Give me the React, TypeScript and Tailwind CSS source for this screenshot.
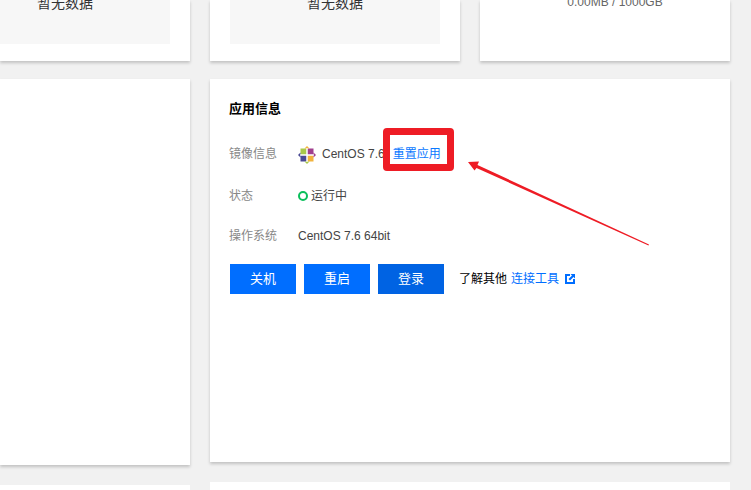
const font = { fontFamily: '"Liberation Sans", "Noto Sans CJK SC", sans-serif' };

function CentOS() {
  return (
    <svg width="18" height="18" viewBox="0 0 18 18" className="shrink-0 mt-[2px]">
      <rect x="2.500" y="2.500" width="6" height="6" fill="#a9c94a" />
      <rect x="9.500" y="2.500" width="6" height="6" fill="#a03f8e" />
      <rect x="2.500" y="9.500" width="6" height="6" fill="#4a4a94" />
      <rect x="9.500" y="9.500" width="6" height="6" fill="#f2b33d" />
      <path d="M9 0l2.500 2.500H6.500z" fill="#f2b33d" />
      <path d="M18 9l-2.500 2.500v-5z" fill="#a03f8e" />
      <path d="M9 18l-2.500-2.500h5z" fill="#a9c94a" />
      <path d="M0 9l2.500-2.500v5z" fill="#4a4a94" />
      <path d="M9 2v14M2 9h14" stroke="#fff" strokeWidth="1" />
    </svg>
  );
}

function Row({ label, children, className }: { label: string; children: React.ReactNode; className?: string }) {
  return (
    <div className={`flex items-center h-5 text-xs ${className ?? ""}`}>
      <span className="w-[69px] text-[#888]">{label}</span>
      <div className="flex items-center text-[#444]">{children}</div>
    </div>
  );
}

function Btn({ children, dark }: { children: React.ReactNode; dark?: boolean }) {
  return (
    <div className={`w-[66px] h-[30px] flex items-center justify-center text-[13px] text-white ${dark ? "bg-[#0063e3]" : "bg-[#006eff]"}`}>
      {children}
    </div>
  );
}

const shadow = "shadow-[0_2px_3px_rgba(0,0,0,0.2)]";

export default function App() {
  return (
    <div style={font} className="relative w-[751px] h-[490px] overflow-hidden bg-[#f1f1f1]">
      <div className="flex gap-5 w-[730px] h-[61px]">
        <div className={`w-[190px] h-[61px] bg-white ${shadow} pr-5`}>
          <div className="h-11 bg-[#f7f7f7] flex justify-end pr-[77px]">
            <span className="text-sm leading-4 -mt-[5px] text-[#333]">暂无数据</span>
          </div>
        </div>
        <div className={`w-[250px] h-[61px] bg-white ${shadow} px-5`}>
          <div className="h-11 bg-[#f7f7f7] flex justify-center">
            <span className="text-sm leading-4 -mt-[5px] text-[#333]">暂无数据</span>
          </div>
        </div>
        <div className={`w-[250px] h-[61px] bg-white ${shadow} flex justify-center pl-5`}>
          <span className="text-xs leading-4 -mt-[6px] text-[#666]">0.00MB / 1000GB</span>
        </div>
      </div>

      <div className="flex gap-5 w-[730px] mt-[18px]">
        <div className="w-[190px] flex flex-col gap-5">
          <div className={`h-[386px] bg-white ${shadow}`} />
          <div className="h-10 bg-white" />
        </div>
        <div className="w-[520px] flex flex-col gap-5">
          <div className={`h-[383px] bg-white ${shadow} pl-[19px] pt-[22px]`}>
            <h2 className="text-[13px] leading-4 font-bold text-black">应用信息</h2>
            <div className="mt-[27px] flex flex-col">
              <Row label="镜像信息">
                <CentOS />
                <span className="ml-[6px]">CentOS 7.6</span>
                <span className="ml-2 text-[#0a78ff]">重置应用</span>
              </Row>
              <Row label="状态" className="mt-[22px]">
                <span className="w-[10px] h-[10px] rounded-full border-2 border-[#0abf5b] mr-[3px]" />
                运行中
              </Row>
              <Row label="操作系统" className="mt-5">CentOS 7.6 64bit</Row>
            </div>
            <div className="flex items-center gap-2 mt-[18px] pl-px">
              <Btn>关机</Btn>
              <Btn>重启</Btn>
              <Btn dark>登录</Btn>
              <span className="ml-[7px] text-xs text-black">了解其他</span>
              <span className="ml-[-4px] text-xs text-[#006eff]">连接工具</span>
              <svg width="10" height="10" viewBox="0 0 10 10" className="-ml-[2px]">
                <path d="M0 0h5v2H2v6h6V5h2v5H0z" fill="#006eff" />
                <path d="M5.500 0H10v4.500L8.500 3 5 6.500 3.500 5 7 1.500z" fill="#006eff" />
              </svg>
            </div>
          </div>
          <div className="h-10 bg-white" />
        </div>
      </div>

      <div className="absolute left-[383px] top-[128px] w-[71px] h-[43px] border-[7px] border-[#ee1c25] rounded" />
      <svg className="absolute left-[460px] top-[155px]" width="200" height="100" viewBox="460 155 200 100">
        <path d="M468 162L479 161.500L477.500 165L649 244.500L648.500 245.500L476.500 168L474.500 170.500Z" fill="#ee1c25" />
      </svg>
    </div>
  );
}
